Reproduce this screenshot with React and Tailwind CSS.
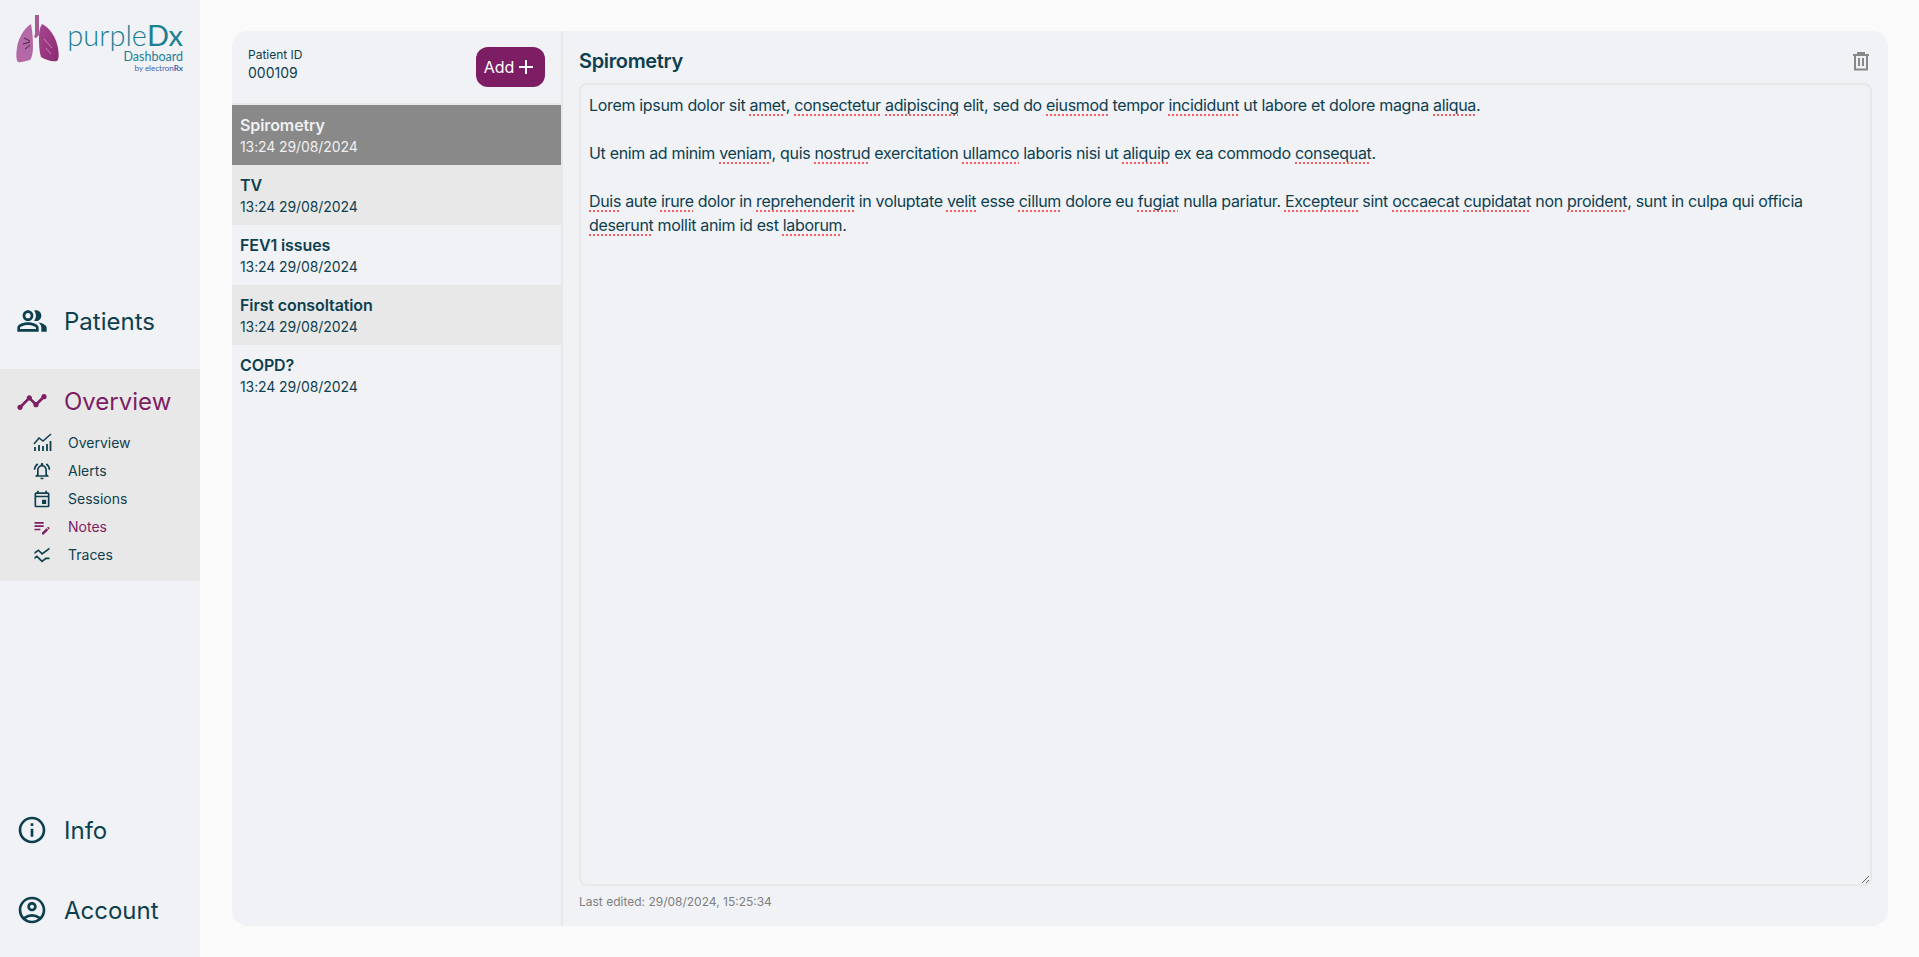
import React from "react";
import {
  MdOutlinePeopleAlt,
  MdTimeline,
  MdOutlineNotificationsActive,
  MdOutlineEvent,
  MdEditNote,
  MdOutlineSsidChart,
  MdInfoOutline,
  MdOutlineAccountCircle,
  MdAdd,
} from "react-icons/md";

const notes = [
  { title: "Spirometry", state: "selected" },
  { title: "TV", state: "alt" },
  { title: "FEV1 issues", state: "" },
  { title: "First consoltation", state: "alt" },
  { title: "COPD?", state: "" },
];

// Bars with a trend line, the icon in the sub menu
const BarsTrend = () => (
  <svg width="20" height="20" viewBox="0 0 20 20" fill="none" stroke="currentColor">
    <path d="M3 18v-4M7 18v-6M11 18v-5M15 18v-7M18.500 18v-10" strokeWidth="1.8" />
    <path d="M2 11l5-6 4 3 8-7" strokeWidth="1.5" />
  </svg>
);

const TrashIcon = () => (
  <svg width="18" height="20" viewBox="0 0 18 20" fill="none" stroke="#888888" strokeWidth="2">
    <path d="M1 4h16M6 4V2h6v2M3 4v14.500h12V4M7 7v8M11 7v8" />
  </svg>
);

const Sp = ({ children }) => (
  <span className="underline decoration-dotted decoration-[#f56060] decoration-[1.5px] underline-offset-[3px]">
    {children}
  </span>
);

const MainNav = ({ icon: Icon, label }) => (
  <div className="flex items-center h-20 pl-4 gap-4">
    <Icon size={32} />
    <span className="text-2xl mt-[2px]">{label}</span>
  </div>
);

const SubNav = ({ icon, label, active }) => (
  <div className={`flex items-center h-7 pl-8 gap-4 text-sm ${active ? "text-[#7d1d63]" : ""}`}>
    <span className="w-5 flex justify-center">{icon}</span>
    <span>{label}</span>
  </div>
);

const App = () => {
  return (
    <div className="flex h-[957px] bg-[#fafafa] text-[#0e3f4f] font-['Inter',sans-serif] overflow-hidden">
      {/* Sidebar */}
      <div className="w-[200px] shrink-0 bg-[#f0f2f6] flex flex-col">
        <div className="h-[281px] pt-[14px] pl-[16px]">
          <div className="flex">
            <svg width="44" height="50" viewBox="0 0 44 50">
              <defs>
                <linearGradient id="lung" x1="0" y1="0" x2="1" y2="1">
                  <stop offset="0" stopColor="#a8458f" />
                  <stop offset="1" stopColor="#8a2a72" />
                </linearGradient>
              </defs>
              <path d="M19 1h4v20l-3 3-2-1 1-3z" fill="#a65a95" />
              <path d="M15 10c1 6 2 12 2 22 0 6-1 12-3 14-5 1-10 3-12 2-2-2-2-8-1-14 1-9 7-20 14-24z" fill="#b469a6" />
              <path d="M26 10c7 3 14 13 16 24 1 6 1 11-1 13-5 1-11-1-16-4-2-6-2-14-2-21 0-5 1-9 3-12z" fill="url(#lung)" />
              <path d="M8 24l6 3M7 30l7-2M9 35l5-4" stroke="#4a2050" strokeWidth="1" fill="none" />
              <path d="M28 25l8 9M30 34l5 6" stroke="#d9a7cf" strokeWidth="0.7" fill="none" />
            </svg>
            <div className="ml-[7px] w-[116px] text-right text-[#1d7f92]">
              <div className="text-[29px] leading-[30px] font-['Lato',sans-serif] font-light mt-[6px] whitespace-nowrap">
                purple<span className="font-normal">Dx</span>
              </div>
              <div className="text-[12.500px] leading-[13px] font-['Lato',sans-serif]">Dashboard</div>
              <div className="text-[8px] leading-[11px] text-[#4660a8] font-['Lato',sans-serif]">
                by electron<b>Rx</b>
              </div>
            </div>
          </div>
        </div>

        <MainNav icon={MdOutlinePeopleAlt} label="Patients" />

        <div className="mt-2 bg-[#e8e8e8] pt-[9px] pb-3">
          <div className="flex items-center h-12 pl-4 gap-4 text-[#7d1d63]">
            <MdTimeline size={32} />
            <span className="text-2xl">Overview</span>
          </div>
          <div className="mt-[3px]">
            <SubNav icon={<BarsTrend />} label="Overview" />
            <SubNav icon={<MdOutlineNotificationsActive size={22} />} label="Alerts" />
            <SubNav icon={<MdOutlineEvent size={22} />} label="Sessions" />
            <SubNav icon={<MdEditNote size={22} />} label="Notes" active />
            <SubNav icon={<MdOutlineSsidChart size={22} />} label="Traces" />
          </div>
        </div>

        <div className="mt-auto pb-[7px]">
          <MainNav icon={MdInfoOutline} label="Info" />
          <MainNav icon={MdOutlineAccountCircle} label="Account" />
        </div>
      </div>

      {/* Main panel */}
      <div className="flex-1 min-w-0 pl-8 pr-[31px] py-[31px]">
        <div className="flex h-full bg-[#f0f2f6] rounded-2xl overflow-hidden">
          {/* Note list */}
          <div className="w-[331px] shrink-0 border-r-2 border-[#e8e8e8]">
            <div className="h-[74px] flex items-center justify-between pl-4 pr-[16px] border-b-2 border-[#e8e8e8]">
              <div className="mb-[4px]">
                <div className="text-xs leading-4">Patient ID</div>
                <div className="text-sm leading-5">000109</div>
              </div>
              <button className="flex items-center justify-center pl-[1px] w-[69px] h-10 rounded-xl bg-[#7d1d63] text-white">
                Add
                <MdAdd size={24} />
              </button>
            </div>
            {notes.map((note) => (
              <div
                key={note.title}
                className={`h-[60px] px-2 py-2 ${
                  note.state === "selected"
                    ? "bg-[#898989] text-[#f0f0f0]"
                    : note.state === "alt"
                      ? "bg-[#e8e8e8]"
                      : ""
                }`}
              >
                <div className="font-semibold leading-6 tracking-[-0.1px]">{note.title}</div>
                <div className="text-sm leading-5 tracking-[-0.1px]">13:24 29/08/2024</div>
              </div>
            ))}
          </div>

          {/* Note editor */}
          <div className="flex-1 min-w-0 flex flex-col px-4">
            <div className="flex items-center justify-between h-[52px] shrink-0">
              <h2 className="text-xl font-semibold mt-[7px] tracking-[-0.35px]">Spirometry</h2>
              <span className="mr-[2px] mt-[8px]">
                <TrashIcon />
              </span>
            </div>
            <div className="h-[803px] shrink-0 border-2 border-[#e8e8e8] rounded-lg px-2 py-[8px] resize overflow-auto whitespace-pre-wrap leading-6 tracking-[-0.33px]">
              Lorem ipsum dolor sit <Sp>amet</Sp>, <Sp>consectetur</Sp> <Sp>adipiscing</Sp> elit, sed do <Sp>eiusmod</Sp> tempor <Sp>incididunt</Sp> ut labore et dolore magna <Sp>aliqua</Sp>.
              {"\n\n"}
              Ut enim ad minim <Sp>veniam</Sp>, quis <Sp>nostrud</Sp> exercitation <Sp>ullamco</Sp> laboris nisi ut <Sp>aliquip</Sp> ex ea commodo <Sp>consequat</Sp>.
              {"\n\n"}
              <Sp>Duis</Sp> aute <Sp>irure</Sp> dolor in <Sp>reprehenderit</Sp> in voluptate <Sp>velit</Sp> esse <Sp>cillum</Sp> dolore eu <Sp>fugiat</Sp> nulla pariatur. <Sp>Excepteur</Sp> sint <Sp>occaecat</Sp> <Sp>cupidatat</Sp> non <Sp>proident</Sp>, sunt in culpa qui officia <Sp>deserunt</Sp> mollit anim id est <Sp>laborum</Sp>.
            </div>
            <div className="mt-2 text-xs leading-4 text-[#808080]">Last edited: 29/08/2024, 15:25:34</div>
          </div>
        </div>
      </div>
    </div>
  );
};

export default App;
